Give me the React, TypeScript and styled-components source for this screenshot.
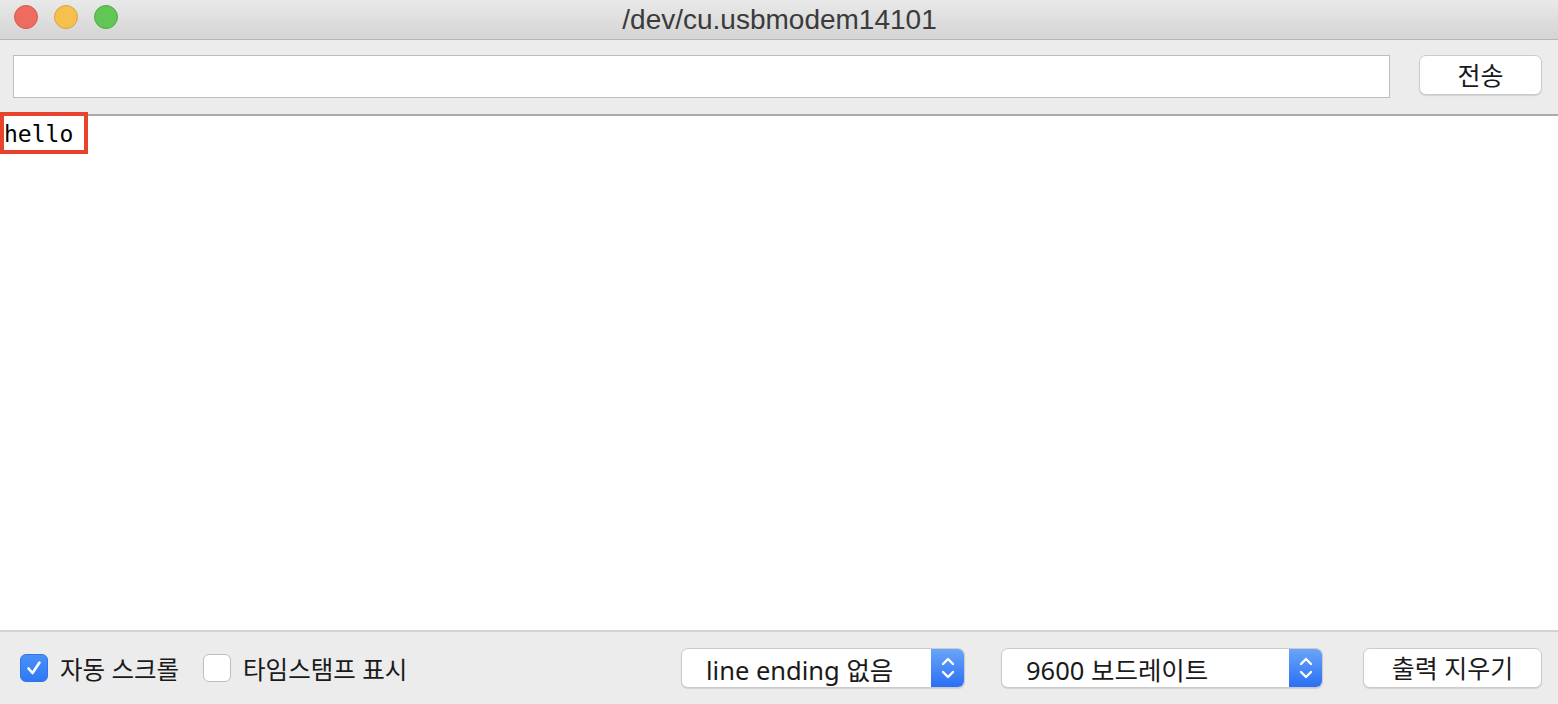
import React from 'react';
import styled, { createGlobalStyle } from 'styled-components';

const GlobalStyle = createGlobalStyle`
  html, body {
    padding: 0;
    margin: 0;
    height: 100%;
    overflow: hidden;
  }
  #root {
    height: 100%;
  }
`;

const UI_FONT = `'Noto Sans', 'Noto Sans CJK KR', sans-serif`;

const Window = styled.div`
  display: flex;
  flex-direction: column;
  height: 100vh;
  background: #ececec;
  font-family: ${UI_FONT};
  color: #1a1a1a;
`;

const TitleBar = styled.div`
  position: relative;
  display: flex;
  align-items: center;
  justify-content: center;
  height: 39px;
  background: linear-gradient(#e9e9e9, #d4d4d4);
  border-bottom: 1px solid #b6b6b6;
`;

const Lights = styled.div`
  position: absolute;
  left: 14px;
  top: 5px;
  display: flex;
  gap: 16px;
`;

const Light = styled.span<{ fill: string; ring: string }>`
  width: 22px;
  height: 22px;
  border-radius: 50%;
  background: ${({ fill }) => fill};
  border: 1px solid ${({ ring }) => ring};
`;

const Title = styled.div`
  font-family: 'Liberation Sans', 'Noto Sans', sans-serif;
  font-size: 28px;
  color: #3b3b3b;
  margin-left: 1px;
`;

const SendBar = styled.div`
  display: flex;
  align-items: flex-start;
  gap: 29px;
  height: 76px;
  padding: 15px 16px 0 13px;
  box-sizing: border-box;
  border-bottom: 2px solid #ababab;
`;

const SendInput = styled.input`
  flex: 1;
  height: 43px;
  box-sizing: border-box;
  border: 1px solid #bdbdbd;
  background: #fff;
  outline: none;
  font-size: 20px;
`;

const MacButton = styled.button<{ width: number }>`
  width: ${({ width }) => width}px;
  height: 40px;
  box-sizing: border-box;
  background: #fff;
  border: 1px solid #cbcbcb;
  border-radius: 7px;
  box-shadow: 0 1px 1px rgba(0, 0, 0, 0.12);
  font-family: ${UI_FONT};
  font-size: 25px;
  color: #1a1a1a;
  padding: 0;
  line-height: 1;
`;

const Output = styled.div`
  position: relative;
  flex: 1;
  background: #fff;
  border-bottom: 2px solid #d2d2d2;
`;

const Line = styled.div`
  font-family: 'DejaVu Sans Mono', 'Liberation Mono', monospace;
  font-size: 23px;
  line-height: 30px;
  padding: 3px 0 0 4px;
  color: #000;
`;

const Highlight = styled.div`
  position: absolute;
  left: 0;
  top: -4px;
  width: 88px;
  height: 42px;
  box-sizing: border-box;
  border: 4px solid #e8432c;
`;

const StatusBar = styled.div`
  display: flex;
  align-items: center;
  justify-content: space-between;
  height: 72px;
  padding: 0 16px 0 20px;
  box-sizing: border-box;
`;

const Group = styled.div<{ gap: number }>`
  display: flex;
  align-items: center;
  gap: ${({ gap }) => gap}px;
`;

const Check = styled.label`
  display: flex;
  align-items: center;
  gap: 12px;
  font-size: 24.5px;
`;

const Box = styled.span<{ checked?: boolean }>`
  display: flex;
  align-items: center;
  justify-content: center;
  width: 28px;
  height: 28px;
  box-sizing: border-box;
  border-radius: 6px;
  background: ${({ checked }) => (checked ? 'linear-gradient(#4a90f8, #2f78f4)' : '#fff')};
  border: 1px solid ${({ checked }) => (checked ? '#2f74e8' : '#bdbdbd')};
`;

const Select = styled.div<{ width: number }>`
  display: flex;
  width: ${({ width }) => width}px;
  height: 40px;
  box-sizing: border-box;
  background: #fff;
  border: 1px solid #cbcbcb;
  border-radius: 7px;
  box-shadow: 0 1px 1px rgba(0, 0, 0, 0.12);
  overflow: hidden;
`;

const SelectText = styled.div`
  flex: 1;
  display: flex;
  align-items: center;
  padding-left: 24px;
  font-size: 25.5px;
`;

const Stepper = styled.div`
  display: flex;
  align-items: center;
  justify-content: center;
  width: 33px;
  background: linear-gradient(#6aa5f9, #2a6ff5);
`;

const Chevrons = () => (
  <svg width="16" height="26" viewBox="0 0 16 26" fill="none" stroke="#fff" strokeWidth="2.4" strokeLinecap="round" strokeLinejoin="round">
    <path d="M3 9 L8 4 L13 9" />
    <path d="M3 17 L8 22 L13 17" />
  </svg>
);

const Tick = () => (
  <svg width="18" height="18" viewBox="0 0 18 18" fill="none" stroke="#fff" strokeWidth="2.6" strokeLinecap="round" strokeLinejoin="round">
    <path d="M3.5 9.5 L7.5 14 L14.5 3.5" />
  </svg>
);

const App: React.FC = () => (
  <>
    <GlobalStyle />
    <Window>
      <TitleBar>
        <Lights>
          <Light fill="#ee6b5f" ring="#d6594d" />
          <Light fill="#f6c04f" ring="#d9a43d" />
          <Light fill="#62c655" ring="#4fab42" />
        </Lights>
        <Title>/dev/cu.usbmodem14101</Title>
      </TitleBar>
      <SendBar>
        <SendInput />
        <MacButton width={123}>전송</MacButton>
      </SendBar>
      <Output>
        <Line>hello</Line>
        <Highlight />
      </Output>
      <StatusBar>
        <Group gap={24}>
          <Check>
            <Box checked>
              <Tick />
            </Box>
            자동 스크롤
          </Check>
          <Check>
            <Box />
            타임스탬프 표시
          </Check>
        </Group>
        <Group gap={36}>
          <Select width={284}>
            <SelectText>line ending 없음</SelectText>
            <Stepper>
              <Chevrons />
            </Stepper>
          </Select>
          <Select width={322}>
            <SelectText>9600 보드레이트</SelectText>
            <Stepper>
              <Chevrons />
            </Stepper>
          </Select>
          <MacButton width={179} style={{ marginLeft: 4 }}>출력 지우기</MacButton>
        </Group>
      </StatusBar>
    </Window>
  </>
);

export default App;
